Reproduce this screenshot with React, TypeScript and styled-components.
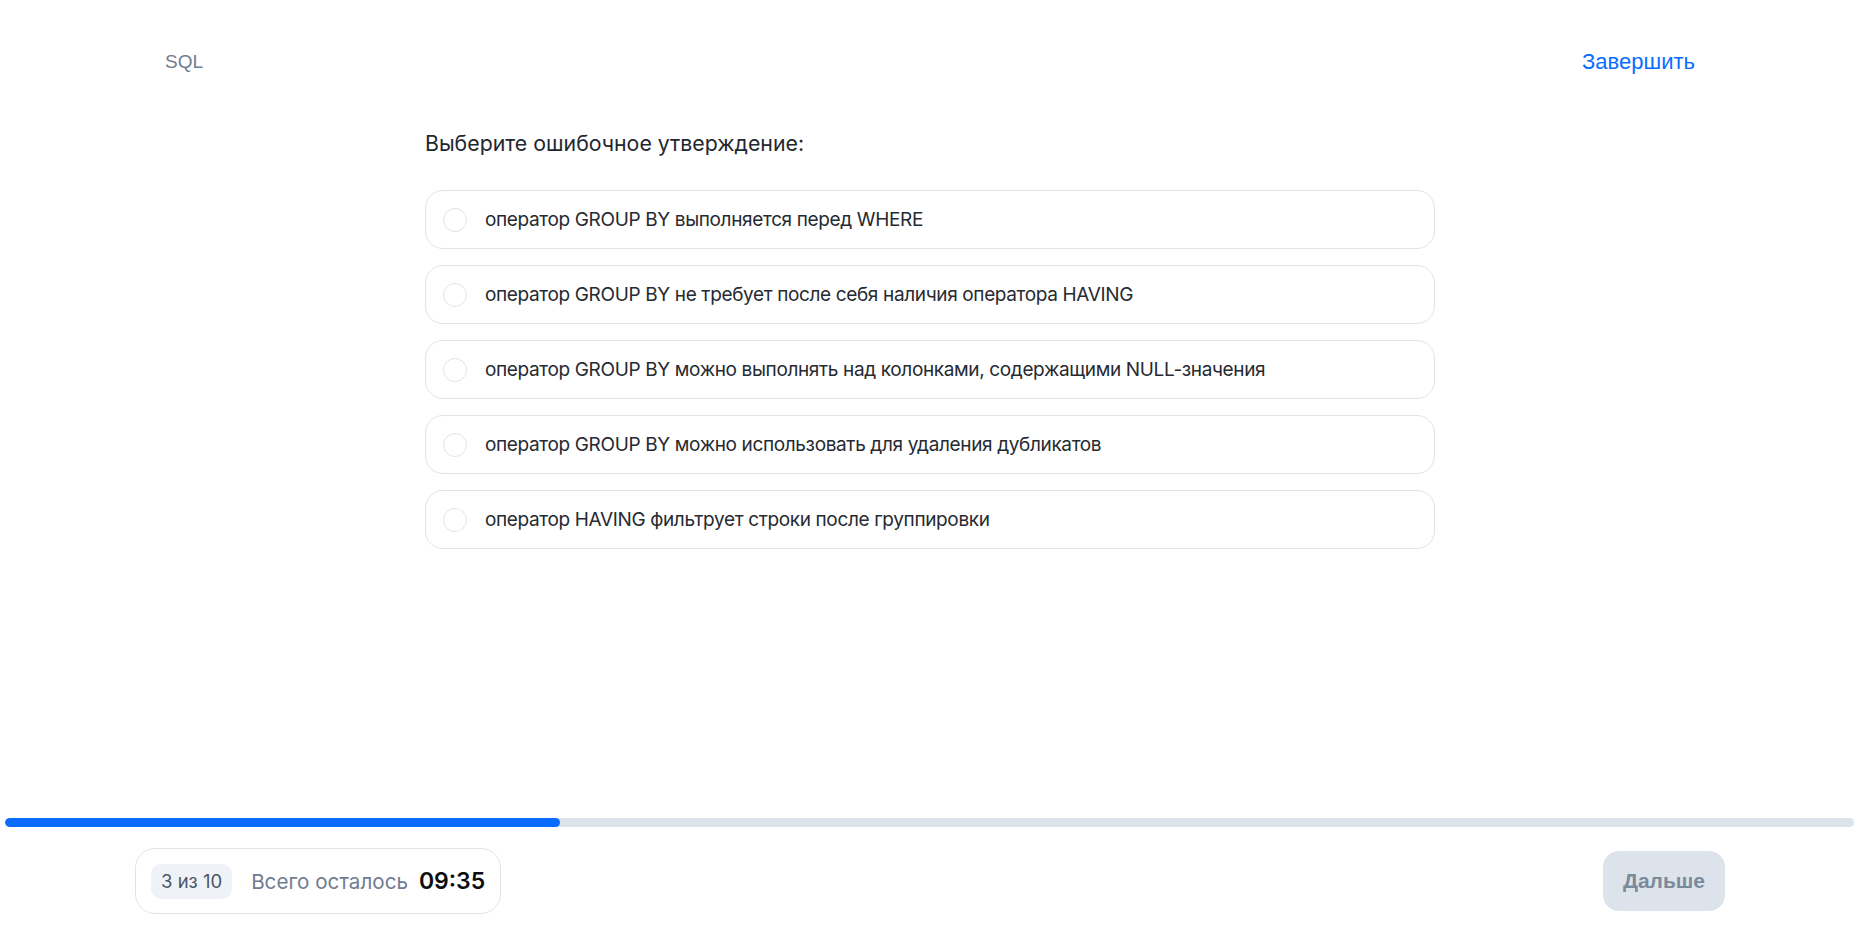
import React from 'react';
import styled, { createGlobalStyle } from 'styled-components';

const GlobalStyle = createGlobalStyle`
  html, body {
    margin: 0;
    padding: 0;
    background: #ffffff;
  }
  body {
    font-family: Inter, "Noto Sans", "Liberation Sans", sans-serif;
    color: #262a31;
  }
  * {
    box-sizing: border-box;
  }
`;

const Page = styled.div`
  height: 935px;
  display: flex;
  flex-direction: column;
`;

const Header = styled.header`
  display: flex;
  justify-content: space-between;
  align-items: center;
  height: 124px;
  padding: 0 165px 0 165px;
`;

const Subject = styled.span`
  font-family: "Liberation Sans", Arial, sans-serif;
  font-size: 19px;
  color: #6f7d91;
`;

const FinishLink = styled.a`
  font-family: "Liberation Sans", Arial, sans-serif;
  font-size: 22px;
  color: #0a6cff;
  cursor: pointer;
  text-decoration: none;
`;

const Main = styled.main`
  flex: 1;
  width: 1010px;
  margin: 0 auto;
  padding-top: 6px;
`;

const Question = styled.h2`
  margin: 0 0 34px 0;
  font-size: 21.3px;
  line-height: 26px;
  font-weight: 400;
  color: #23272e;
`;

const Options = styled.div`
  display: flex;
  flex-direction: column;
  gap: 16px;
`;

const Option = styled.label`
  display: flex;
  align-items: center;
  gap: 18px;
  height: 59px;
  padding: 0 17px;
  border: 1px solid #dfe4ec;
  border-radius: 18px;
  cursor: pointer;
  font-size: 19px;
  letter-spacing: -0.36px;
  color: #262a31;
`;

const Radio = styled.span`
  width: 24px;
  height: 24px;
  border-radius: 50%;
  border: 1px solid #dfe4ec;
  flex-shrink: 0;
`;

const ProgressTrack = styled.div`
  margin: 0 6px 0 5px;
  height: 9px;
  border-radius: 5px;
  background: #dde3eb;
  overflow: hidden;
`;

const ProgressFill = styled.div`
  height: 100%;
  border-radius: 5px;
  background: #0a6cff;
`;

const Footer = styled.footer`
  display: flex;
  justify-content: space-between;
  align-items: center;
  padding: 21px 135px 21px 135px;
`;

const TimerCard = styled.div`
  display: flex;
  align-items: center;
  height: 66px;
  padding: 0 15px;
  border: 1px solid #dfe4ec;
  border-radius: 20px;
`;

const Counter = styled.span`
  display: flex;
  align-items: center;
  height: 35px;
  padding: 0 10px;
  border-radius: 10px;
  background: #eff3f8;
  font-size: 18.5px;
  color: #4c5563;
  margin-right: 19px;
`;

const Remaining = styled.span`
  font-size: 20.6px;
  color: #6f7d91;
  margin-right: 11px;
`;

const Time = styled.span`
  font-size: 23px;
  font-weight: 600;
  color: #0b0d10;
`;

const NextButton = styled.button`
  width: 122px;
  height: 60px;
  border: none;
  border-radius: 16px;
  background: #dde3eb;
  color: #7b8a9b;
  font-family: "Liberation Sans", Arial, sans-serif;
  font-size: 21px;
  font-weight: 700;
`;

const options = [
  'оператор GROUP BY выполняется перед WHERE',
  'оператор GROUP BY не требует после себя наличия оператора HAVING',
  'оператор GROUP BY можно выполнять над колонками, содержащими NULL-значения',
  'оператор GROUP BY можно использовать для удаления дубликатов',
  'оператор HAVING фильтрует строки после группировки',
];

const current = 3;
const total = 10;

export default function App() {
  return (
    <>
      <GlobalStyle />
      <Page>
        <Header>
          <Subject>SQL</Subject>
          <FinishLink>Завершить</FinishLink>
        </Header>
        <Main>
          <Question>Выберите ошибочное утверждение:</Question>
          <Options>
            {options.map((text) => (
              <Option key={text}>
                <Radio />
                {text}
              </Option>
            ))}
          </Options>
        </Main>
        <ProgressTrack>
          <ProgressFill style={{ width: `${(current / total) * 100}%` }} />
        </ProgressTrack>
        <Footer>
          <TimerCard>
            <Counter>
              {current} из {total}
            </Counter>
            <Remaining>Всего осталось</Remaining>
            <Time>09:35</Time>
          </TimerCard>
          <NextButton>Дальше</NextButton>
        </Footer>
      </Page>
    </>
  );
}
